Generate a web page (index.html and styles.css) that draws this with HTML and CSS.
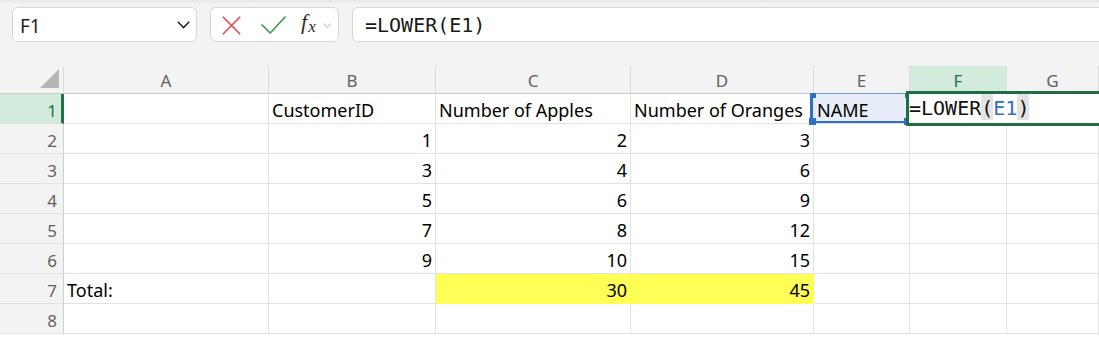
FILE: index.html
```html
<!DOCTYPE html>
<html>
<head>
<meta charset="utf-8">
<link rel="stylesheet" href="styles.css">
</head>
<body>
<div class="toolbar">
  <div class="namebox">
    <span class="name">F1</span>
    <svg class="chev" width="13" height="8" viewBox="0 0 13 8"><polyline points="0.8,0.8 6.5,6.6 12.2,0.8" fill="none" stroke="#222" stroke-width="1.5"/></svg>
  </div>
  <div class="fxgroup">
    <svg class="ico-x" width="19" height="19" viewBox="0 0 19 19"><path d="M0.8 0.8 L18.2 18.2 M18.2 0.8 L0.8 18.2" stroke="#e0474c" stroke-width="1.5" fill="none"/></svg>
    <svg class="ico-ok" width="25" height="18" viewBox="0 0 25 18"><polyline points="0.5,8.4 9.2,17 24.5,0.6" fill="none" stroke="#3d9a48" stroke-width="1.5"/></svg>
    <span class="fx"><i>f</i><i class="fxsub">x</i></span>
    <svg class="ico-dd" width="8" height="5" viewBox="0 0 8 5"><polyline points="0.5,0.5 4,4.3 7.5,0.5" fill="none" stroke="#b4b4b4" stroke-width="1"/></svg>
  </div>
  <div class="formula">=LOWER(E1)</div>
</div>

<div class="sheet">
  <div class="grid">
    <div class="corner"><span class="tri"></span></div>
    <div class="ch">A</div>
    <div class="ch">B</div>
    <div class="ch">C</div>
    <div class="ch">D</div>
    <div class="ch">E</div>
    <div class="ch ch-sel">F</div>
    <div class="ch">G</div>

    <div class="rh rh-sel">1</div>
    <div class="c"></div>
    <div class="c">CustomerID</div>
    <div class="c">Number of Apples</div>
    <div class="c">Number of Oranges</div>
    <div class="c c-ref">NAME</div>
    <div class="c"></div>
    <div class="c"></div>

    <div class="rh">2</div>
    <div class="c"></div>
    <div class="c n">1</div>
    <div class="c n">2</div>
    <div class="c n">3</div>
    <div class="c"></div>
    <div class="c"></div>
    <div class="c"></div>

    <div class="rh">3</div>
    <div class="c"></div>
    <div class="c n">3</div>
    <div class="c n">4</div>
    <div class="c n">6</div>
    <div class="c"></div>
    <div class="c"></div>
    <div class="c"></div>

    <div class="rh">4</div>
    <div class="c"></div>
    <div class="c n">5</div>
    <div class="c n">6</div>
    <div class="c n">9</div>
    <div class="c"></div>
    <div class="c"></div>
    <div class="c"></div>

    <div class="rh">5</div>
    <div class="c"></div>
    <div class="c n">7</div>
    <div class="c n">8</div>
    <div class="c n">12</div>
    <div class="c"></div>
    <div class="c"></div>
    <div class="c"></div>

    <div class="rh">6</div>
    <div class="c"></div>
    <div class="c n">9</div>
    <div class="c n">10</div>
    <div class="c n">15</div>
    <div class="c"></div>
    <div class="c"></div>
    <div class="c"></div>

    <div class="rh">7</div>
    <div class="c">Total:</div>
    <div class="c"></div>
    <div class="c n hl">30</div>
    <div class="c n hl">45</div>
    <div class="c"></div>
    <div class="c"></div>
    <div class="c"></div>

    <div class="rh">8</div>
    <div class="c"></div>
    <div class="c"></div>
    <div class="c"></div>
    <div class="c"></div>
    <div class="c"></div>
    <div class="c"></div>
    <div class="c"></div>
  </div>

  <div class="ref-box">
    <span class="hd hd-tl"></span>
    <span class="hd hd-tr"></span>
    <span class="hd hd-bl"></span>
    <span class="hd hd-br"></span>
  </div>

  <div class="edit"><span class="et">=LOWER</span><span class="par">(</span><span class="et eref">E1</span><span class="par">)</span></div>
</div>
</body>
</html>
```

FILE: styles.css
```css
* { box-sizing: border-box; }

html, body {
  margin: 0;
  padding: 0;
  background: #ffffff;
  overflow: hidden;
}

body {
  font-family: "Noto Sans", "Liberation Sans", sans-serif;
  color: #000;
}

/* ---------- toolbar ---------- */
.toolbar {
  height: 66px;
  background: linear-gradient(#e6e6e6, #f3f3f3 4px);
  display: flex;
  align-items: flex-start;
  padding: 7px 0 0 12px;
  gap: 13px;
  overflow: hidden;
}

.namebox {
  width: 185px;
  height: 35px;
  background: #fff;
  border: 1px solid #d6d6d6;
  border-radius: 6px;
  display: flex;
  align-items: center;
  justify-content: space-between;
  padding: 2px 6px 0 7px;
  flex: none;
}

.name {
  font-size: 19px;
  color: #1f1f1f;
}

.chev { margin-top: -2px; }

.fxgroup {
  width: 129px;
  height: 35px;
  background: #fff;
  border: 1px solid #d6d6d6;
  border-radius: 6px;
  display: flex;
  align-items: center;
  padding-left: 11px;
  flex: none;
}

.ico-x { margin-top: 1px; }
.ico-ok { margin-left: 20px; margin-top: 0; }

.fx {
  margin-left: 15px;
  font-family: "Liberation Serif", "DejaVu Serif", serif;
  font-size: 22px;
  color: #2b2b2b;
  line-height: 1;
  display: flex;
  align-items: flex-start;
  margin-top: -3px;
}

.fxsub {
  font-family: "Liberation Serif", "DejaVu Serif", serif;
  font-size: 17px;
  margin-left: 1px;
  margin-top: 7px;
}

.ico-dd { margin-left: 7px; margin-top: 1px; }

.formula {
  flex: 1;
  margin-right: -12px;
  height: 35px;
  background: #fff;
  border: 1px solid #d6d6d6;
  border-radius: 6px;
  display: flex;
  align-items: center;
  padding-left: 12px;
  font-family: "DejaVu Sans Mono", "Liberation Mono", monospace;
  font-size: 20px;
  color: #1a1a1a;
}

/* ---------- sheet ---------- */
.sheet {
  position: relative;
}

.grid {
  display: grid;
  grid-template-columns: 64px 205px 167px 195px 183px 96px 97px 1fr;
  grid-template-rows: 28px repeat(8, 30px);
}

.corner {
  background: #f3f3f3;
  border-right: 1px solid #dcdcdc;
  border-bottom: 1px solid #c9c9c9;
  position: relative;
}

.tri {
  position: absolute;
  left: 40px;
  top: 3px;
  width: 0;
  height: 0;
  border-style: solid;
  border-width: 0 0 19px 19px;
  border-color: transparent transparent #b6b6b6 transparent;
}

.ch {
  background: #f3f3f3;
  border-right: 1px solid #dcdcdc;
  border-bottom: 1px solid #c9c9c9;
  display: flex;
  align-items: center;
  justify-content: center;
  padding-top: 2px;
  font-size: 17px;
  color: #616161;
}

.ch-sel {
  background: #d3ebdc;
  color: #217346;
}

.rh {
  background: #f3f3f3;
  border-right: 1px solid #cfcfcf;
  border-bottom: 1px solid #e1e1e1;
  display: flex;
  align-items: flex-end;
  justify-content: flex-end;
  padding: 0 6px 1px 0;
  font-size: 17px;
  color: #616161;
}

.rh-sel {
  background: #d3ebdc;
  color: #217346;
  border-right: 3px solid #217346;
  padding-right: 4px;
}

.c {
  border-right: 1px solid #e1e1e1;
  border-bottom: 1px solid #e1e1e1;
  display: flex;
  align-items: flex-end;
  padding: 0 3px 1px 3px;
  font-size: 18px;
  white-space: nowrap;
  overflow: hidden;
}

.n { justify-content: flex-end; }

.hl {
  background: #ffff55;
  border-right-color: #ffff55;
  border-bottom-color: #ffff55;
}

.c-ref {
  background: #e7eef9;
}

/* reference highlight on E1 */
.ref-box {
  position: absolute;
  left: 810px;
  top: 27px;
  width: 98px;
  height: 30px;
  border: 1px solid #6a9be0;
  border-left: 3px solid #2f6fc6;
  border-bottom: 2px solid #2f6fc6;
}

.hd {
  position: absolute;
  background: #2f6fc6;
}

.hd-tl { left: -3px; top: -1px; width: 6px; height: 5px; }
.hd-tr { right: -3px; top: -1px; width: 5px; height: 5px; }
.hd-bl { left: -4px; bottom: -4px; width: 7px; height: 7px; }
.hd-br { right: -3px; bottom: -4px; width: 6px; height: 7px; }

/* in-cell editor on F1 */
.edit {
  position: absolute;
  left: 906px;
  top: 25px;
  right: -20px;
  height: 35px;
  background: #fff;
  border: 3px solid #1f6e43;
  font-family: "DejaVu Sans Mono", "Liberation Mono", monospace;
  font-size: 20px;
  color: #111;
  white-space: nowrap;
  padding-left: 0;
  display: flex;
  align-items: flex-start;
}

.et, .par {
  display: block;
  height: 26px;
  line-height: 29px;
}

.par {
  background: #e3e3e3;
}

.eref {
  color: #2f6fc6;
}
```
